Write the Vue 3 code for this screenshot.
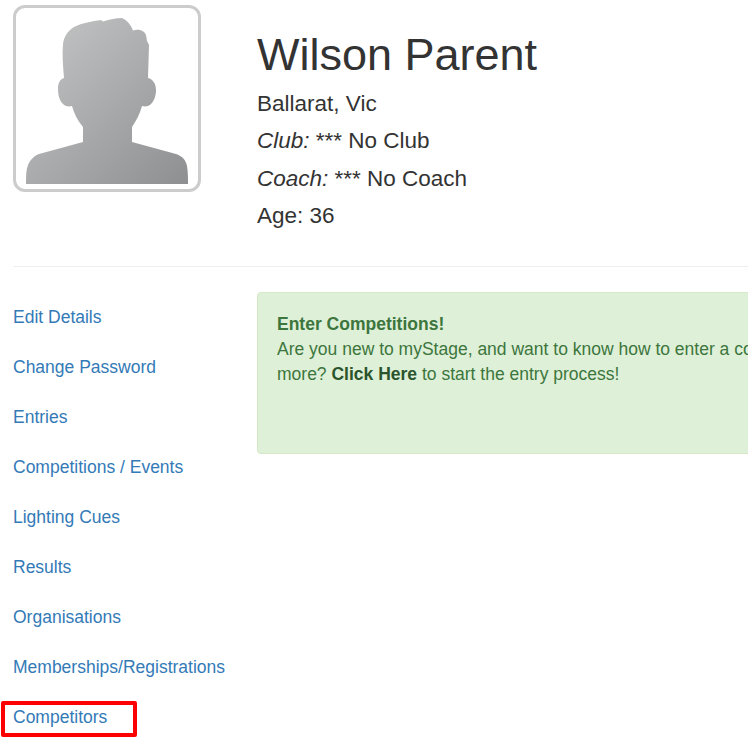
<script setup>
const links = ['Edit Details', 'Change Password', 'Entries', 'Competitions / Events', 'Lighting Cues', 'Results', 'Organisations', 'Memberships/Registrations', 'Competitors']
</script>

<template>
  <div class="page">
    <header class="profile">
      <div class="avatar">
        <svg width="182" height="181" viewBox="16 8 182 181" aria-label="Profile picture">
          <defs>
            <linearGradient id="sil" x1="0" y1="0" x2="1" y2="1">
              <stop offset="0" stop-color="#c6c7c7" />
              <stop offset="1" stop-color="#8e8f91" />
            </linearGradient>
          </defs>
          <path fill="url(#sil)" d="M26 184 C26 176 26 170 28 165 C30 160 34 156 39 154 L83 142 L83 127 C77 120 74 113 72 106 C68 107 65 106 63 104 C59 100 58 94 58 89 C58 84 59 80 64 78 C63 66 62 54 63 44 C64 36 68 31 74 27 C82 23 92 21 101 20 L103 21.5 C110 19.5 116 18 122 18 C127 20 131 25 133 30.5 C138 29 144 30 146 35 L147 41 L149 45 L148 78 C153 79 156 84 156 90 C156 96 154 101 151 104 C149 106 146 107 142 106 C140 114 136 121 132 127 L132 142 L176 154 C182 156 186 160 187 166 C188 172 188 178 188 184 Z" />
        </svg>
      </div>
      <div class="info">
        <h1>Wilson Parent</h1>
        <p>Ballarat, Vic</p>
        <p><em>Club:</em> *** No Club</p>
        <p><em>Coach:</em> *** No Coach</p>
        <p>Age: 36</p>
      </div>
    </header>
    <hr />
    <div class="body-row">
      <nav class="side">
        <a v-for="l in links" :key="l" href="#" :class="{ marked: l === 'Competitors' }">{{ l }}</a>
      </nav>
      <section class="alert">
        <strong>Enter Competitions!</strong><br />
        Are you new to myStage, and want to know how to enter a competition? Read on to learn<br />
        more? <a href="#">Click Here</a> to start the entry process!
      </section>
    </div>
  </div>
</template>

<style scoped>
.page {
  width: 748px;
  height: 750px;
  overflow: hidden;
  box-sizing: border-box;
  padding: 5px 0 0 13px;
  font-family: "Liberation Sans", Arial, sans-serif;
  color: #333;
}
.profile {
  display: flex;
  gap: 56px;
  height: 240px;
}
.avatar {
  width: 188px;
  height: 187px;
  box-sizing: border-box;
  border: 3px solid #ccc;
  border-radius: 12px;
  flex: none;
  background: #fff;
  overflow: hidden;
}
.avatar svg { display: block; }
.info { padding-top: 25px; }
h1 {
  margin: 0 0 5px;
  font-size: 45px;
  line-height: 50px;
  font-weight: 400;
  color: #333;
  white-space: nowrap;
}
.info p {
  margin: 0;
  font-size: 22.5px;
  line-height: 37.4px;
  white-space: nowrap;
}
hr {
  margin: 21px 0 0;
  border: 0;
  border-top: 1px solid #eee;
}
.body-row {
  display: flex;
  margin-top: 25px;
}
.side {
  width: 244px;
  flex: none;
  display: flex;
  flex-direction: column;
  gap: 25px;
  padding-top: 13px;
}
.side a {
  position: relative;
  font-size: 17.5px;
  line-height: 25px;
  color: #337ab7;
  text-decoration: none;
  white-space: nowrap;
}
.side a.marked::after {
  content: "";
  position: absolute;
  left: -12px;
  top: -4px;
  width: 128px;
  height: 28px;
  border: 4px solid #f00;
  border-radius: 2px;
}
.alert {
  width: 700px;
  height: 162px;
  flex: none;
  box-sizing: border-box;
  padding: 19px 19px;
  background: #dff0d8;
  border: 1px solid #d6e9c6;
  border-radius: 4px;
  color: #3c763d;
  font-size: 17.5px;
  line-height: 25px;
  white-space: nowrap;
}
.alert a {
  font-weight: 700;
  color: #2b542c;
  text-decoration: none;
}
</style>
